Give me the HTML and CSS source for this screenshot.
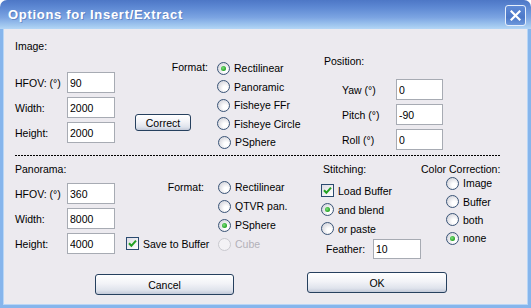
FILE: index.html
```html
<!DOCTYPE html>
<html lang="en">
<head>
    <meta charset="UTF-8">
    <title>Options for Insert/Extract</title>
    <link rel="stylesheet" href="styles.css">
</head>
<body>
    <div class="window">
        <div class="titlebar">
            <span class="title">Options for Insert/Extract</span>
            <span class="close">
                <svg width="11" height="11" viewBox="0 0 11 11"><path d="M1.5 1.5 L9.5 9.5 M9.5 1.5 L1.5 9.5" stroke="#fff" stroke-width="2.2" stroke-linecap="square"/></svg>
            </span>
        </div>

        <div class="client">
            <!-- source image -->
            <div class="section top">
                <div class="fields img-fields">
                    <div class="heading">Image:</div>
                    <div class="rows">
                        <div class="row"><span class="lbl">HFOV: (°)</span><input class="box" value="90"></div>
                        <div class="row"><span class="lbl">Width:</span><input class="box" value="2000"></div>
                        <div class="row"><span class="lbl">Height:</span><input class="box" value="2000"></div>
                    </div>
                </div>
                <div class="mid img-mid">
                    <div class="fmt">Format:</div>
                    <button class="btn correct">Correct</button>
                </div>
                <div class="radios img-radios">
                    <div class="opt"><span class="radio on"></span>Rectilinear</div>
                    <div class="opt"><span class="radio"></span>Panoramic</div>
                    <div class="opt"><span class="radio"></span>Fisheye FFr</div>
                    <div class="opt"><span class="radio"></span>Fisheye Circle</div>
                    <div class="opt shift"><span class="radio"></span>PSphere</div>
                </div>
                <div class="position">
                    <div class="heading">Position:</div>
                    <div class="rows">
                        <div class="row"><span class="lbl">Yaw (°)</span><input class="box" value="0"></div>
                        <div class="row"><span class="lbl">Pitch (°)</span><input class="box" value="-90"></div>
                        <div class="row"><span class="lbl">Roll (°)</span><input class="box" value="0"></div>
                    </div>
                </div>
            </div>

            <div class="divider"></div>

            <!-- panorama -->
            <div class="section bottom">
                <div class="fields pano-fields">
                    <div class="heading">Panorama:</div>
                    <div class="rows">
                        <div class="row"><span class="lbl">HFOV: (°)</span><input class="box" value="360"></div>
                        <div class="row"><span class="lbl">Width:</span><input class="box" value="8000"></div>
                        <div class="row"><span class="lbl">Height:</span><input class="box" value="4000"></div>
                    </div>
                </div>
                <div class="mid pano-mid">
                    <div class="fmt">Format:</div>
                    <div class="opt check-opt"><span class="check on"><svg width="9" height="9" viewBox="0 0 9 9"><path d="M1 4.2 L3.4 6.8 L8 1.6" fill="none" stroke="#21a121" stroke-width="2"/></svg></span>Save to Buffer</div>
                </div>
                <div class="radios pano-radios">
                    <div class="opt"><span class="radio"></span>Rectilinear</div>
                    <div class="opt"><span class="radio"></span>QTVR pan.</div>
                    <div class="opt"><span class="radio on"></span>PSphere</div>
                    <div class="opt disabled"><span class="radio"></span>Cube</div>
                </div>
                <div class="stitching">
                    <div class="heading">Stitching:</div>
                    <div class="stitch-opts">
                        <div class="opt"><span class="check on"><svg width="9" height="9" viewBox="0 0 9 9"><path d="M1 4.2 L3.4 6.8 L8 1.6" fill="none" stroke="#21a121" stroke-width="2"/></svg></span>Load Buffer</div>
                        <div class="opt"><span class="radio on"></span>and blend</div>
                        <div class="opt"><span class="radio"></span>or paste</div>
                    </div>
                    <div class="row feather"><span class="lbl">Feather:</span><input class="box" value="10"></div>
                </div>
                <div class="colorcorr">
                    <div class="heading">Color Correction:</div>
                    <div class="cc-opts">
                        <div class="opt"><span class="radio"></span>Image</div>
                        <div class="opt"><span class="radio"></span>Buffer</div>
                        <div class="opt"><span class="radio"></span>both</div>
                        <div class="opt"><span class="radio on"></span>none</div>
                    </div>
                </div>
            </div>

            <div class="actions">
                <button class="btn cancel">Cancel</button>
                <button class="btn ok">OK</button>
            </div>
        </div>
    </div>
</body>
</html>
```

FILE: styles.css
```css
body {
    margin: 0;
    background: #ffffff;
    font-family: "Liberation Sans", Arial, sans-serif;
    font-size: 10.5px;
    color: #000;
}

.window {
    width: 531px;
    height: 308px;
    display: flex;
    flex-direction: column;
}

/* title bar */
.titlebar {
    height: 29px;
    flex: none;
    display: flex;
    align-items: center;
    justify-content: space-between;
    padding: 0 5px 0 8px;
    border-radius: 7px 7px 0 0;
    background: linear-gradient(#4d77c6 0%, #5d88d3 25%, #7ba4e2 60%, #a4caf0 90%, #b4d6f6 100%);
    box-sizing: border-box;
}

.title {
    color: #fff;
    font-weight: bold;
    font-size: 13px;
    letter-spacing: 0.7px;
    text-shadow: 1px 1px 0 rgba(40, 70, 140, 0.35);
    margin-top: -1px;
}

.close {
    width: 21px;
    height: 21px;
    box-sizing: border-box;
    border: 1px solid #e6effb;
    border-radius: 3px;
    background: linear-gradient(#5f8ad6, #4c78c8 60%, #6d98dc);
    display: flex;
    align-items: center;
    justify-content: center;
    margin-top: 2px;
}

/* buttons */
.btn {
    box-sizing: border-box;
    margin: 0;
    padding: 0;
    border: 1px solid #26405e;
    border-radius: 3px;
    background: linear-gradient(#ffffff 0%, #f2f3f7 45%, #dfe3ec 80%, #c3cad9 100%);
    font-family: inherit;
    font-size: 10.5px;
    color: #000;
    cursor: pointer;
}

/* client area */
.client {
    flex: 1;
    background: #eceaef;
    border: 3px solid #86b5ec;
    border-top: none;
    box-shadow: inset 1px 0 0 #b8d6f6, inset -1px 0 0 #b8d6f6, inset 0 -1px 0 #b8d6f6;
    padding: 0 12px;
    box-sizing: border-box;
}

.section {
    display: flex;
    align-items: flex-start;
}

.top {
    height: 126px;
}

.bottom {
    height: 116px;
}

.heading {
    line-height: 13px;
    height: 13px;
}

.rows {
    display: flex;
    flex-direction: column;
    gap: 4px;
}

.row {
    display: flex;
    align-items: center;
    height: 21px;
}

.lbl {
    display: block;
}

.box {
    display: block;
    box-sizing: border-box;
    width: 48px;
    height: 21px;
    margin: 0;
    padding: 0 2px;
    border: 1px solid #a7abb3;
    background: #fff;
    font-family: inherit;
    font-size: 10.5px;
    color: #000;
    outline: none;
}

/* left column with inputs */
.fields {
    width: 100px;
}

.fields .lbl {
    width: 53px;
}

.img-fields {
    padding-top: 11px;
}

.img-fields .rows {
    margin-top: 19px;
}

.pano-fields {
    padding-top: 7px;
}

.pano-fields .rows {
    margin-top: 7px;
}

/* middle column: format label + button/checkbox */
.mid {
    display: flex;
    flex-direction: column;
}

.fmt {
    line-height: 13px;
    text-align: right;
}

.img-mid {
    width: 73px;
    margin-left: 20px;
    padding-top: 32px;
    align-items: flex-start;
}

.img-mid .fmt {
    align-self: stretch;
}

.img-mid .correct {
    margin-top: 40px;
    width: 56px;
    height: 17px;
}

.pano-mid {
    width: 84px;
    margin-left: 11px;
    padding-top: 25px;
}

.pano-mid .fmt {
    padding-right: 6px;
}

.check-opt {
    margin-top: 43px;
    height: 13px;
}

/* radio groups */
.opt {
    display: flex;
    align-items: center;
    gap: 4px;
    white-space: nowrap;
}

.radios .opt {
    height: 18.5px;
}

.img-radios {
    width: 107px;
    margin-left: 9px;
    padding-top: 30px;
}

.img-radios .shift {
    padding-left: 1px;
}

.pano-radios {
    width: 103px;
    margin-left: 8px;
    padding-top: 22px;
}

.pano-radios .opt {
    height: 18.9px;
}

.radio {
    width: 13px;
    height: 13px;
    flex: none;
    box-sizing: border-box;
    border-radius: 50%;
    border: 1px solid #3a5477;
    background: radial-gradient(circle at 65% 65%, #ffffff 20%, #e6e6ea 55%, #c9cbd3 100%);
    display: flex;
    align-items: center;
    justify-content: center;
}

.radio.on::after {
    content: "";
    width: 5px;
    height: 5px;
    border-radius: 50%;
    background: radial-gradient(circle at 40% 40%, #7fe07f, #21a121 70%);
}

.disabled {
    color: #b3b1b9;
}

.disabled .radio {
    border-color: #c9c9cf;
    background: #f3f2f5;
}

.check {
    width: 13px;
    height: 13px;
    flex: none;
    box-sizing: border-box;
    border: 1px solid #2a4a70;
    background: linear-gradient(135deg, #dcdce4, #ffffff);
    display: flex;
    align-items: center;
    justify-content: center;
}

/* position */
.position {
    padding-top: 26px;
}

.position .rows {
    margin-top: 11px;
    padding-left: 18px;
}

.position .lbl {
    width: 54px;
}

.position .box {
    width: 47px;
}

/* divider */
.divider {
    width: 485px;
    height: 1px;
    background: repeating-linear-gradient(to right, #000 0 2px, transparent 2px 3px);
}

/* stitching */
.stitching {
    width: 100px;
    padding-top: 7px;
}

.stitching .heading {
    padding-left: 2px;
}

.stitch-opts {
    margin-top: 5px;
}

.stitch-opts .opt {
    height: 19px;
}

.feather {
    margin-top: 1px;
    padding-left: 5px;
    height: 20px;
}

.feather .lbl {
    width: 52px;
}

.feather .box {
    height: 20px;
}

/* color correction */
.colorcorr {
    padding-top: 7px;
}

.cc-opts {
    margin-top: -2px;
    padding-left: 25px;
}

.cc-opts .opt {
    height: 18.4px;
}

/* dialog buttons */
.actions {
    display: flex;
    align-items: flex-start;
    padding-left: 80px;
}

.actions .cancel {
    width: 139px;
    height: 21px;
    margin-top: 2px;
}

.actions .ok {
    width: 140px;
    height: 21px;
    margin-left: 73px;
}
```
